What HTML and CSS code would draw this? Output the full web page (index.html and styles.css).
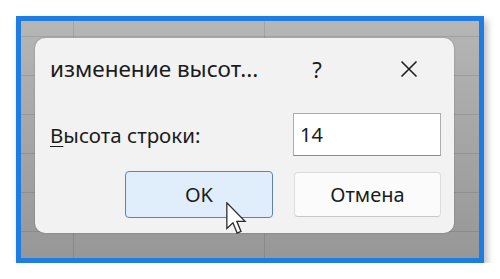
FILE: index.html
```html
<!DOCTYPE html>
<html lang="ru">
<head>
<meta charset="utf-8">
<title>Высота строки</title>
<link rel="stylesheet" href="styles.css">
</head>
<body>
<div class="frame">
  <div class="dialog">
    <div class="title-row">
      <div class="title">изменение высот...</div>
      <div class="help">?</div>
      <div class="close">
        <svg width="18" height="18" viewBox="0 0 18 18"><path d="M1.5 1.5 L16.5 16.5 M16.5 1.5 L1.5 16.5" stroke="#1f1f1f" stroke-width="1.6" fill="none"/></svg>
      </div>
    </div>
    <div class="field-row">
      <label class="label"><u>В</u>ысота строки:</label>
      <div class="input">14</div>
    </div>
    <div class="button-row">
      <div class="btn btn-ok">OK</div>
      <div class="btn btn-cancel">Отмена</div>
    </div>
  </div>
</div>
<svg class="cursor" width="21" height="33" viewBox="0 0 13 20.5"><path d="M0.5 0.5 L0.5 16.5 L4.3 12.9 L6.9 19.3 L9.3 18.3 L6.7 12 L11.8 12 Z" fill="#ffffff" stroke="#2a2a2a" stroke-width="0.8" stroke-linejoin="miter"/></svg>
</body>
</html>
```
FILE: styles.css
```css
html, body {
  margin: 0;
  padding: 0;
  background: #ffffff;
}
body {
  font-family: "Noto Sans", "Open Sans", sans-serif;
  color: #1b1b1b;
}
.frame {
  box-sizing: border-box;
  margin: 16px 0 0 16px;
  width: 468px;
  height: 247px;
  border: 5px solid #1e7ce2;
  box-shadow: 3px 4px 7px rgba(0, 0, 0, 0.28);
  padding: 17px 0 0 14px;
  background-color: #a3a3a3;
  background-image:
    repeating-linear-gradient(to right, transparent 0, transparent 190px, rgba(0,0,0,0.1) 190px, rgba(0,0,0,0.1) 191px),
    repeating-linear-gradient(to bottom, transparent 0, transparent 38px, rgba(0,0,0,0.1) 38px, rgba(0,0,0,0.1) 39px),
    linear-gradient(to bottom, #b6b6b6 0%, #a7a7a7 45%, #979797 100%);
  background-position: -138px 0, 0 -23px, 0 0;
}
.dialog {
  box-sizing: border-box;
  width: 419px;
  height: 195px;
  background: #f2f2f2;
  border-radius: 10px;
  box-shadow: 0 0 2px rgba(0, 0, 0, 0.25);
  display: flex;
  flex-direction: column;
  padding: 0 13px 0 15px;
}
.title-row {
  height: 75px;
  display: flex;
  align-items: flex-start;
  padding-top: 16px;
  box-sizing: border-box;
}
.title {
  flex: 1;
  font-size: 22.5px;
  line-height: 30px;
}
.help {
  width: 40px;
  text-align: center;
  font-size: 22px;
  line-height: 30px;
  margin-right: 52px;
}
.close {
  width: 40px;
  height: 30px;
  display: flex;
  align-items: center;
  justify-content: center;
  margin-right: 12px;
}
.field-row {
  height: 43px;
  display: flex;
  align-items: center;
  justify-content: space-between;
}
.label {
  font-size: 20.5px;
  line-height: 26px;
}
.label u {
  text-decoration-thickness: 1px;
  text-underline-offset: 3px;
}
.input {
  box-sizing: border-box;
  width: 148px;
  height: 43px;
  background: #ffffff;
  border: 1px solid #adadad;
  border-bottom-color: #8a8a8a;
  font-size: 20px;
  line-height: 41px;
  padding-left: 6px;
}
.button-row {
  margin-top: 15px;
  display: flex;
  justify-content: flex-end;
  gap: 21px;
}
.btn {
  box-sizing: border-box;
  width: 148px;
  height: 47px;
  border-radius: 4px;
  display: flex;
  align-items: center;
  justify-content: center;
  font-size: 20px;
}
.btn-ok {
  background: #e0eefb;
  border: 1px solid #5d84ad;
}
.btn-cancel {
  width: 147px;
  height: 45px;
  margin-top: 1px;
  background: #fbfbfb;
  border: 1px solid #dcdcdc;
  border-bottom-color: #c8c8c8;
}
.cursor {
  position: absolute;
  left: 226px;
  top: 202px;
}
```
